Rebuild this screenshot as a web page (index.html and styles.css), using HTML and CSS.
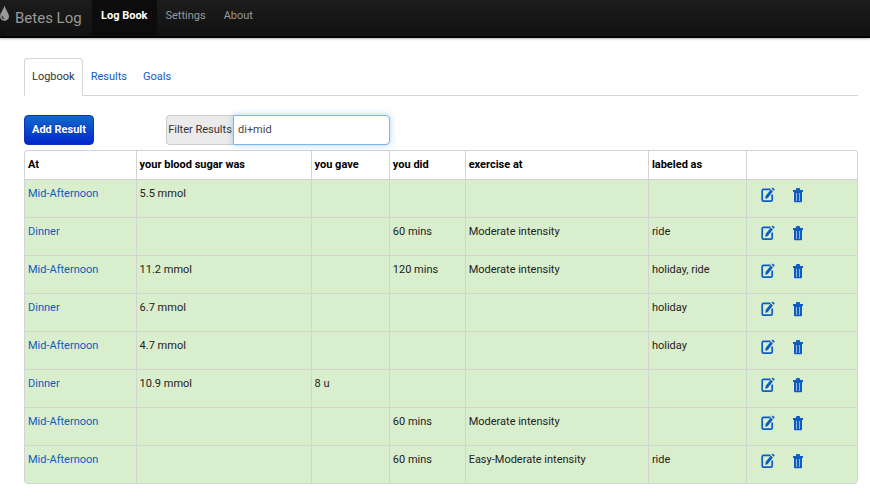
FILE: index.html
```html
<!DOCTYPE html>
<html lang="en">
<head>
<meta charset="utf-8">
<title>Betes Log</title>
<link rel="stylesheet" href="styles.css">
</head>
<body>
<svg class="sprite" aria-hidden="true">
  <symbol id="edit" viewBox="0 0 14 16">
    <path d="M9.500 2.300H2.500a1.300 1.300 0 0 0-1.300 1.300v9.300a1.300 1.300 0 0 0 1.300 1.300h7.400a1.300 1.300 0 0 0 1.300-1.300V7.500" fill="none" stroke="currentColor" stroke-width="1.700"/>
    <path d="M4.300 12l.4-3.200L9.900 2.500l2 1.900L6.800 10.900zM10.600 1.800l1-1.300 2.200 1.800-1.100 1.400z" fill="currentColor"/>
  </symbol>
  <symbol id="trash" viewBox="0 0 10 16">
    <path d="M0 3h2.800L3.400 1h3.200l.6 2H10v2H0z" fill="currentColor"/>
    <path d="M1 5h8v9.400a.8.8 0 0 1-.8.800H1.800a.8.8 0 0 1-.8-.8z" fill="currentColor"/>
    <path d="M3.500 6v8M6.500 6v8" stroke="#8fb6dc" stroke-width="1"/>
  </symbol>
</svg>
<header class="navbar">
  <a class="brand" href="#">
    <svg class="drop" viewBox="0 0 10 18" aria-hidden="true"><path d="M5 0C4.400 3.500 0 8.500 0 12.300A4.800 4.800 0 0 0 5 17a4.800 4.800 0 0 0 5-4.700C10 8.500 5.600 3.500 5 0z" fill="currentColor"/><path d="M2.300 11.500c0 2 .8 3.200 2.500 3.200" fill="none" stroke="#333" stroke-width="1.300"/></svg>
    <span>Betes Log</span>
  </a>
  <nav class="nav">
    <a class="active" href="#">Log Book</a>
    <a href="#">Settings</a>
    <a href="#">About</a>
  </nav>
</header>
<main class="content">
  <nav class="tabs">
    <a class="active" href="#">Logbook</a>
    <a href="#">Results</a>
    <a href="#">Goals</a>
  </nav>
  <div class="toolbar">
    <button class="add" type="button">Add Result</button>
    <div class="filter">
      <label for="filter">Filter Results</label>
      <input id="filter" type="text" value="di+mid" autofocus>
    </div>
  </div>
  <table class="log">
    <colgroup><col class="c-at"><col class="c-sugar"><col class="c-gave"><col class="c-did"><col class="c-exercise"><col class="c-label"><col></colgroup>
    <thead>
      <tr><th>At</th><th>your blood sugar was</th><th>you gave</th><th>you did</th><th>exercise at</th><th>labeled as</th><th></th></tr>
    </thead>
    <tbody>
      <tr><td><a href="#">Mid-Afternoon</a></td><td>5.5 mmol</td><td></td><td></td><td></td><td></td><td><div class="actions"><a href="#" aria-label="Edit"><svg class="edit"><use href="#edit"/></svg></a><a href="#" aria-label="Delete"><svg class="trash"><use href="#trash"/></svg></a></div></td></tr>
      <tr><td><a href="#">Dinner</a></td><td></td><td></td><td>60 mins</td><td>Moderate intensity</td><td>ride</td><td><div class="actions"><a href="#" aria-label="Edit"><svg class="edit"><use href="#edit"/></svg></a><a href="#" aria-label="Delete"><svg class="trash"><use href="#trash"/></svg></a></div></td></tr>
      <tr><td><a href="#">Mid-Afternoon</a></td><td>11.2 mmol</td><td></td><td>120 mins</td><td>Moderate intensity</td><td>holiday, ride</td><td><div class="actions"><a href="#" aria-label="Edit"><svg class="edit"><use href="#edit"/></svg></a><a href="#" aria-label="Delete"><svg class="trash"><use href="#trash"/></svg></a></div></td></tr>
      <tr><td><a href="#">Dinner</a></td><td>6.7 mmol</td><td></td><td></td><td></td><td>holiday</td><td><div class="actions"><a href="#" aria-label="Edit"><svg class="edit"><use href="#edit"/></svg></a><a href="#" aria-label="Delete"><svg class="trash"><use href="#trash"/></svg></a></div></td></tr>
      <tr><td><a href="#">Mid-Afternoon</a></td><td>4.7 mmol</td><td></td><td></td><td></td><td>holiday</td><td><div class="actions"><a href="#" aria-label="Edit"><svg class="edit"><use href="#edit"/></svg></a><a href="#" aria-label="Delete"><svg class="trash"><use href="#trash"/></svg></a></div></td></tr>
      <tr><td><a href="#">Dinner</a></td><td>10.9 mmol</td><td>8 u</td><td></td><td></td><td></td><td><div class="actions"><a href="#" aria-label="Edit"><svg class="edit"><use href="#edit"/></svg></a><a href="#" aria-label="Delete"><svg class="trash"><use href="#trash"/></svg></a></div></td></tr>
      <tr><td><a href="#">Mid-Afternoon</a></td><td></td><td></td><td>60 mins</td><td>Moderate intensity</td><td></td><td><div class="actions"><a href="#" aria-label="Edit"><svg class="edit"><use href="#edit"/></svg></a><a href="#" aria-label="Delete"><svg class="trash"><use href="#trash"/></svg></a></div></td></tr>
      <tr><td><a href="#">Mid-Afternoon</a></td><td></td><td></td><td>60 mins</td><td>Easy-Moderate intensity</td><td>ride</td><td><div class="actions"><a href="#" aria-label="Edit"><svg class="edit"><use href="#edit"/></svg></a><a href="#" aria-label="Delete"><svg class="trash"><use href="#trash"/></svg></a></div></td></tr>
    </tbody>
  </table>
</main>
</body>
</html>
```
FILE: styles.css
```css
* { box-sizing: border-box; }
body {
  margin: 0;
  background: #fff;
  color: #222;
  font: 11px/20px Roboto, "Liberation Sans", sans-serif;
}
a { color: #0f5bc4; text-decoration: none; }
.sprite { display: none; }

.navbar {
  display: flex;
  height: 38px;
  background: linear-gradient(#1c1c1c, #111);
  border-bottom: 2px solid #000;
  box-shadow: 0 1px 2px rgba(0, 0, 0, .3);
}
.brand {
  display: flex;
  align-items: flex-start;
  gap: 6px;
  width: 92px;
  color: #999;
  font-size: 15px;
  white-space: nowrap;
}
.brand span { padding-top: 8px; }
.drop { width: 9px; height: 17px; margin-top: 5px; flex: none; }
.nav { display: flex; }
.nav a { padding: 6px 9px; color: #999; }
.nav .active { background: #0c0c0c; color: #fff; font-weight: bold; }

.content { padding: 20px 12px 16px 24px; }
.tabs { display: flex; border-bottom: 1px solid #d6d6d6; }
.tabs a {
  margin-bottom: -1px;
  padding: 8px 7px;
  border: 1px solid transparent;
  border-radius: 4px 4px 0 0;
}
.tabs .active { background: #fff; border-color: #d6d6d6 #d6d6d6 #fff; color: #333; }

.toolbar { display: flex; gap: 72px; margin: 19px 0 5px; }
.add {
  width: 70px;
  height: 30px;
  padding: 0;
  border: 1px solid #0a35b8;
  border-radius: 4px;
  background: linear-gradient(#1269cc, #0027cc);
  color: #fff;
  font: inherit;
  font-weight: bold;
  text-shadow: 0 -1px 0 rgba(0, 0, 0, .25);
  white-space: nowrap;
}
.filter { display: flex; height: 30px; }
.filter label {
  width: 67px;
  padding: 4px 0;
  border: 1px solid #ccc;
  border-right: 0;
  border-radius: 4px 0 0 4px;
  background: #ebebeb;
  color: #333;
  text-align: center;
  white-space: nowrap;
}
.filter input {
  width: 157px;
  padding: 4px;
  border: 1px solid #80b4ec;
  border-radius: 0 4px 4px 0;
  outline: 0;
  box-shadow: 0 0 6px rgba(82, 168, 236, .5);
  color: #444;
  font: inherit;
}

.log {
  width: 100%;
  table-layout: fixed;
  border: 1px solid #d3d3d3;
  border-left: 0;
  border-radius: 4px;
  border-spacing: 0;
}
.c-at { width: 13.4%; }
.c-sugar { width: 21%; }
.c-gave { width: 9.4%; }
.c-did { width: 9.1%; }
.c-exercise { width: 22%; }
.c-label { width: 11.8%; }
.log th, .log td {
  padding: 4px 3px;
  border-left: 1px solid #d3d3d3;
  text-align: left;
  vertical-align: top;
  white-space: nowrap;
}
.log th { color: #000; }
.log th:first-child { border-top-left-radius: 4px; }
.log td {
  height: 38px;
  border-top: 1px solid #d3d3d3;
  background: #d9eecd;
}
.log tr:last-child td:first-child { border-bottom-left-radius: 4px; }
.log tr:last-child td:last-child { border-bottom-right-radius: 4px; }
.actions { display: flex; gap: 18px; padding: 3px 11px; }
.actions a, .actions svg { display: block; height: 16px; }
.edit { width: 14px; }
.trash { width: 10px; }
```
